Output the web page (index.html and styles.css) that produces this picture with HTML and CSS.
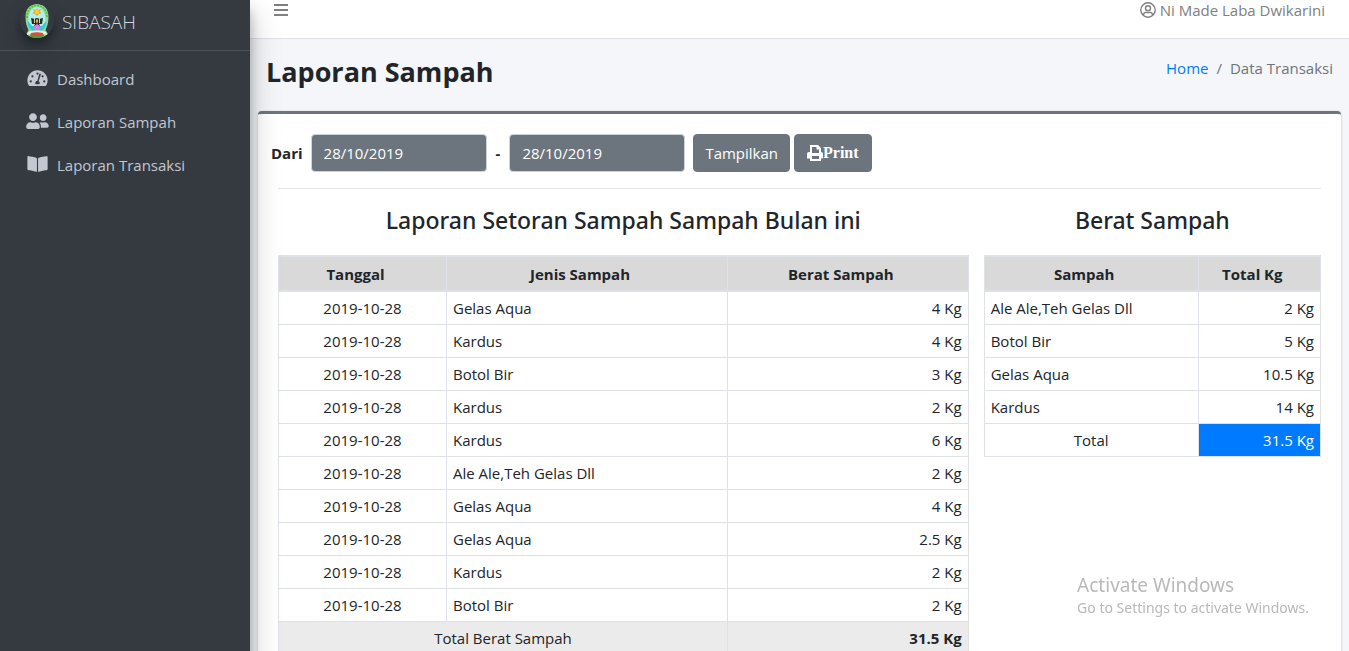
FILE: index.html
```html
<!DOCTYPE html>
<html lang="id">
<head>
<meta charset="utf-8">
<meta name="viewport" content="width=device-width, initial-scale=1">
<title>SIBASAH - Laporan Sampah</title>
<link rel="stylesheet" href="styles.css">
</head>
<body>
<div class="wrapper">
  <aside class="sidebar">
    <a class="brand" href="#">
      <svg class="brand-logo" viewBox="0 0 34 34" aria-hidden="true">
        <path d="M17 0C10 0 5.500 5 5.500 13c0 6 1.500 10 3 13l-2 4 3 3.500h15L28 30l-2.500-4c1.500-3 3-7 3-13C28.500 5 24 0 17 0z" fill="#8fd8a0"/>
        <path d="M7 14C7 6 11 1.500 17 1.500S27 6 27 14" fill="none" stroke="#5fc23f" stroke-width="2" stroke-dasharray="2 1"/>
        <path d="M17 3c-5 0-8.500 5-8.500 12S12 27 17 27s8.500-5 8.500-12S22 3 17 3z" fill="#b4eeee"/>
        <path d="M8 17c-1 5 2 10 9 11 7-1 10-6 9-11l-4 5H12z" fill="#35cbd8"/>
        <path d="M17 4l1 2 3-1-1 3 2 1-3 1-2 2-2-2-3-1 2-1-1-3 3 1z" fill="#e2b326"/>
        <circle cx="17" cy="8" r="2" fill="#f6d33c"/>
        <path d="M11 14l4 1 1-1h2l1 1 4-1-1 6h-3l1 2h-6l1-2h-3z" fill="#272c22"/>
        <path d="M14 15h1v4h-1zM19 15h1v4h-1zM17 14l1 3-1 3-1-3z" fill="#e5cf93"/>
        <path d="M17 20l3 2-1 4h-4l-1-4z" fill="#ee74e4"/>
        <path d="M8 28c5-2 13-2 18 0l1 3c-6-2-14-2-20 0z" fill="#e8f2df"/>
        <path d="M11 29c4-1 8-1 12 0l1 3H10z" fill="#dc4a42"/>
        <path d="M8 32h18l-3 2H11z" fill="#48a23b"/>
      </svg>
      <span class="brand-text">SIBASAH</span>
    </a>
    <nav class="menu">
      <a class="menu-link" href="#">
        <svg class="menu-icon" viewBox="0 0 576 512" aria-hidden="true"><path fill="currentColor" d="M288 32C128.940 32 0 160.940 0 320c0 52.800 14.250 102.260 39.060 144.800 5.610 9.620 16.300 15.200 27.440 15.200h443c11.140 0 21.830-5.580 27.440-15.200C561.750 422.260 576 372.800 576 320c0-159.060-128.940-288-288-288z"/><g fill="#343a40"><circle cx="96" cy="352" r="32"/><circle cx="144" cy="208" r="32"/><circle cx="288" cy="128" r="32"/><circle cx="432" cy="208" r="32"/><circle cx="480" cy="352" r="32"/><path d="M366 131c13 4 20 18 16 30l-62 184c19 12 32 32 32 55 0 12-3 22-9 32H233c-6-10-9-20-9-32 0-34 27-62 61-64l51-190c4-12 17-19 30-15z"/></g></svg>
        <span>Dashboard</span>
      </a>
      <a class="menu-link" href="#">
        <svg class="menu-icon" viewBox="0 0 640 512" aria-hidden="true"><path fill="currentColor" d="M192 256c61.900 0 112-50.100 112-112S253.900 32 192 32 80 82.100 80 144s50.100 112 112 112zm76.800 32h-8.300c-20.800 10-43.900 16-68.500 16s-47.600-6-68.500-16h-8.300C51.600 288 0 339.600 0 403.200V432c0 26.500 21.500 48 48 48h288c26.500 0 48-21.500 48-48v-28.800c0-63.600-51.600-115.200-115.200-115.200zM480 256c53 0 96-43 96-96s-43-96-96-96-96 43-96 96 43 96 96 96zm48 32h-3.800c-13.900 4.800-28.600 8-44.200 8s-30.300-3.200-44.200-8H432c-20.400 0-39.200 5.900-55.700 15.400 24.400 26.300 39.700 61.200 39.700 99.800v38.400c0 2.200-.5 4.300-.6 6.400H592c26.500 0 48-21.500 48-48 0-61.900-50.100-112-112-112z"/></svg>
        <span>Laporan Sampah</span>
      </a>
      <a class="menu-link" href="#">
        <svg class="menu-icon" viewBox="0 0 576 512" aria-hidden="true"><path fill="currentColor" d="M542.220 32.050c-54.800 3.110-163.720 14.430-230.960 55.590-4.640 2.840-7.270 7.890-7.270 13.170v363.870c0 11.550 12.630 18.850 23.280 13.490 69.180-34.820 169.230-44.320 218.700-46.920 16.890-.89 30.020-14.430 30.020-30.660V62.750c.01-17.710-15.350-31.740-33.770-30.700zM264.730 87.640C197.500 46.480 88.580 35.170 33.780 32.050 15.360 31.010 0 45.040 0 62.750V400.600c0 16.240 13.130 29.780 30.020 30.660 49.490 2.600 149.590 12.110 218.770 46.950 10.620 5.350 23.210-1.940 23.210-13.460V100.630c0-5.290-2.620-10.140-7.270-12.990z"/></svg>
        <span>Laporan Transaksi</span>
      </a>
    </nav>
  </aside>

  <div class="page">
    <header class="topbar">
      <button class="toggle" type="button" aria-label="Menu">
        <svg class="toggle-icon" viewBox="0 0 14 12" aria-hidden="true"><path d="M0 1h14M0 6h14M0 11h14" stroke="currentColor" stroke-width="2"/></svg>
      </button>
      <a class="user" href="#">
        <svg class="user-icon" viewBox="0 0 16 16" fill="none" stroke="currentColor" aria-hidden="true"><circle cx="8" cy="8" r="7.200" stroke-width="1.400"/><circle cx="8" cy="6.300" r="2.500" stroke-width="1.400"/><path d="M3.400 13c.3-2 1.600-2.800 3-2.600 1 .3 2.200.3 3.200 0 1.400-.2 2.700.6 3 2.600" stroke-width="1.400"/></svg>
        <span>Ni Made Laba Dwikarini</span>
      </a>
    </header>

    <div class="page-head">
      <h1 class="page-title">Laporan Sampah</h1>
      <nav class="crumbs" aria-label="Breadcrumb"><a class="crumb-link" href="#">Home</a><span>/</span><span>Data Transaksi</span></nav>
    </div>

    <main class="card">
      <form class="filter">
        <label class="filter-label" for="from">Dari</label>
        <input class="date" id="from" type="text" value="28/10/2019">
        <label class="filter-label dash" for="to">-</label>
        <input class="date" id="to" type="text" value="28/10/2019">
        <div class="actions">
          <button class="btn" type="button">Tampilkan</button>
          <button class="btn btn-print" type="button"><svg class="print-icon" viewBox="0 0 16 16" aria-hidden="true"><path fill="currentColor" fill-rule="evenodd" d="M3 0h8l3 3v4c1.200 0 2 .9 2 2v4.500h-2V16H3v-2.500H0V9c0-1.100.9-2 2-2h1zm2 2v6h7V4.500H9.500V2zM5 11v3h7v-3z"/></svg>Print</button>
        </div>
      </form>

      <div class="reports">
        <section>
          <h2 class="report-title">Laporan Setoran Sampah Sampah Bulan ini</h2>
          <table class="table">
            <colgroup><col class="col-date"><col class="col-type"><col></colgroup>
            <thead><tr><th>Tanggal</th><th>Jenis Sampah</th><th>Berat Sampah</th></tr></thead>
            <tbody>
              <tr><td class="mid">2019-10-28</td><td>Gelas Aqua</td><td class="num">4 Kg</td></tr>
              <tr><td class="mid">2019-10-28</td><td>Kardus</td><td class="num">4 Kg</td></tr>
              <tr><td class="mid">2019-10-28</td><td>Botol Bir</td><td class="num">3 Kg</td></tr>
              <tr><td class="mid">2019-10-28</td><td>Kardus</td><td class="num">2 Kg</td></tr>
              <tr><td class="mid">2019-10-28</td><td>Kardus</td><td class="num">6 Kg</td></tr>
              <tr><td class="mid">2019-10-28</td><td>Ale Ale,Teh Gelas Dll</td><td class="num">2 Kg</td></tr>
              <tr><td class="mid">2019-10-28</td><td>Gelas Aqua</td><td class="num">4 Kg</td></tr>
              <tr><td class="mid">2019-10-28</td><td>Gelas Aqua</td><td class="num">2.5 Kg</td></tr>
              <tr><td class="mid">2019-10-28</td><td>Kardus</td><td class="num">2 Kg</td></tr>
              <tr><td class="mid">2019-10-28</td><td>Botol Bir</td><td class="num">2 Kg</td></tr>
            </tbody>
            <tfoot><tr class="sum"><td class="mid" colspan="2">Total Berat Sampah</td><td class="num strong">31.5 Kg</td></tr></tfoot>
          </table>
        </section>
        <section>
          <h2 class="report-title">Berat Sampah</h2>
          <table class="table">
            <colgroup><col class="col-name"><col></colgroup>
            <thead><tr><th>Sampah</th><th>Total Kg</th></tr></thead>
            <tbody>
              <tr><td>Ale Ale,Teh Gelas Dll</td><td class="num">2 Kg</td></tr>
              <tr><td>Botol Bir</td><td class="num">5 Kg</td></tr>
              <tr><td>Gelas Aqua</td><td class="num">10.5 Kg</td></tr>
              <tr><td>Kardus</td><td class="num">14 Kg</td></tr>
              <tr><td class="mid">Total</td><td class="num total">31.5 Kg</td></tr>
            </tbody>
          </table>
        </section>
      </div>
    </main>
  </div>
</div>
<div class="watermark"><div class="watermark-title">Activate Windows</div><div>Go to Settings to activate Windows.</div></div>
</body>
</html>
```
FILE: styles.css
```css
* { box-sizing: border-box; }

body {
  margin: 0;
  height: 100vh;
  overflow: hidden;
  background: #f4f6f9;
  color: #212529;
  font: 400 15px/24px "Open Sans", "Noto Sans", sans-serif;
}

a { color: inherit; text-decoration: none; }

.wrapper { display: flex; min-height: 100vh; }

.sidebar {
  position: relative;
  z-index: 2;
  flex: 0 0 250px;
  background: #343a40;
  color: #c2c7d0;
  box-shadow: 0 14px 28px rgba(0, 0, 0, .25), 0 10px 10px rgba(0, 0, 0, .22);
}

.brand {
  display: flex;
  align-items: center;
  gap: 8px;
  height: 51px;
  padding: 0 20px 8px;
  border-bottom: 1px solid #4b545c;
}

.brand-logo {
  width: 34px;
  height: 34px;
  border-radius: 50%;
  box-shadow: 0 10px 20px rgba(0, 0, 0, .19), 0 6px 6px rgba(0, 0, 0, .23);
}

.brand-text { padding-top: 2px; font-size: 19px; font-weight: 300; color: #d3d6da; }

.menu { display: grid; gap: 3px; padding: 8px; }

.menu-link {
  display: flex;
  align-items: center;
  gap: 7px;
  padding: 8px 17px;
}

.menu-icon { width: 25px; height: 18px; margin-bottom: 2px; }

.page { flex: 1; min-width: 0; }

.topbar {
  display: flex;
  justify-content: space-between;
  align-items: center;
  height: 39px;
  padding: 0 24px 18px;
  background: #fff;
  border-bottom: 1px solid #dee2e6;
  color: #808080;
}

.toggle {
  display: flex;
  padding: 0;
  border: 0;
  background: none;
  color: inherit;
}

.toggle-icon { width: 14px; height: 12px; }

.user { display: flex; align-items: center; gap: 4px; }
.user-icon { width: 16px; height: 16px; }

.page-head {
  display: flex;
  justify-content: space-between;
  padding: 15px 16px 21px;
}

.page-title { margin: 0; font-size: 27px; font-weight: 700; line-height: 36px; }

.crumbs { display: flex; gap: 8px; padding-top: 2px; color: #6c757d; }
.crumb-link { color: #007bff; }

.card {
  margin: 0 8px;
  padding: 20px;
  background: #fff;
  border-top: 3px solid #6c757d;
  border-radius: 4px;
  box-shadow: 0 0 1px rgba(0, 0, 0, .13), 0 1px 3px rgba(0, 0, 0, .2);
}

.filter { display: flex; align-items: center; margin-left: -7px; }

.filter-label { margin-right: 8px; font-weight: 700; }
.dash { margin-left: 9px; margin-right: 9px; }

.date {
  width: 176px;
  height: 38px;
  padding: 6px 12px;
  border: 1px solid #ced4da;
  border-radius: 4px;
  background: #6c757d;
  color: #fff;
  font: inherit;
}

.actions { display: flex; gap: 4px; margin-left: 8px; }

.btn {
  display: flex;
  align-items: center;
  height: 38px;
  padding: 0 11px;
  border: 1px solid #6c757d;
  border-radius: 4px;
  background: #6c757d;
  color: #fff;
  font: inherit;
}

.btn-print { padding: 0 12px; font-family: "Liberation Serif", serif; font-size: 16px; font-weight: 700; }
.print-icon { width: 16px; height: 16px; }

.reports {
  display: grid;
  grid-template-columns: 690fr 337fr;
  gap: 15px;
  margin-top: 16px;
  padding-top: 15px;
  border-top: 1px solid #e5e5e5;
}

.report-title {
  margin: 0;
  font-family: "Noto Sans", "Open Sans", sans-serif;
  font-size: 23px;
  font-weight: 500;
  line-height: 32px;
  text-align: center;
}

.table {
  width: 100%;
  margin-top: 19px;
  border-collapse: collapse;
  table-layout: fixed;
}

.col-date { width: 168px; }
.col-type { width: 281px; }
.col-name { width: 214px; }

.table th, .table td {
  height: 33px;
  padding: 4px 6px;
  border: 1px solid #dee2e6;
}

.table th {
  height: 35px;
  padding-right: 20px;
  border-top-width: 2px;
  border-bottom-width: 2px;
  background: #d9d9d9;
  font-weight: 700;
}

.table .mid { text-align: center; }
.table .num { text-align: right; }
.table .strong { font-weight: 700; }
.table .sum { background: #ebebeb; }
.table .total { background: #007bff; color: #fff; }

.watermark {
  position: fixed;
  right: 40px;
  bottom: 32px;
  z-index: 3;
  color: #b9b9b9;
  font: 14px/22px "Noto Sans", sans-serif;
}

.watermark-title { font-size: 19px; line-height: 24px; }
```
